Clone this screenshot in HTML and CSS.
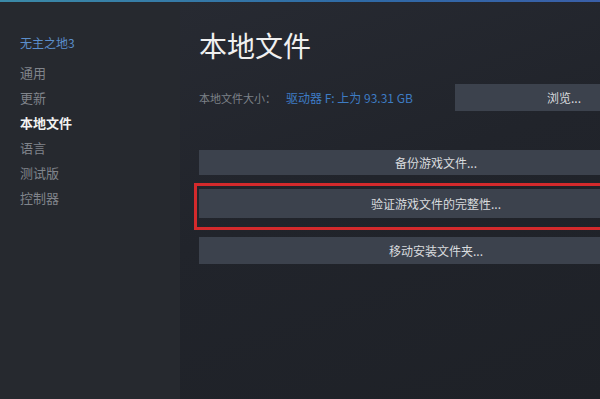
FILE: index.html
```html
<!DOCTYPE html>
<html lang="zh-CN">
<head>
<meta charset="utf-8">
<link rel="stylesheet" href="styles.css">
</head>
<body>
<div class="topbar"></div>
<div class="layout">
  <nav class="sidebar">
    <div class="game">无主之地3</div>
    <div class="nav-item">通用</div>
    <div class="nav-item">更新</div>
    <div class="nav-item active">本地文件</div>
    <div class="nav-item">语言</div>
    <div class="nav-item">测试版</div>
    <div class="nav-item">控制器</div>
  </nav>
  <main class="main">
    <div class="content">
      <h1 class="title">本地文件</h1>
      <div class="size-row">
        <span class="size-label">本地文件大小：</span>
        <span class="size-value">驱动器 F: 上为 93.31 GB</span>
        <div class="btn browse">浏览...</div>
      </div>
      <div class="actions">
        <div class="btn action">备份游戏文件...</div>
        <div class="highlight">
          <div class="btn action verify">验证游戏文件的完整性...</div>
        </div>
        <div class="btn action move">移动安装文件夹...</div>
      </div>
    </div>
  </main>
</div>
</body>
</html>
```

FILE: styles.css
```css
html, body {
  margin: 0;
  padding: 0;
  width: 600px;
  height: 399px;
  overflow: hidden;
  background: #22252c;
  font-family: "Noto Sans CJK SC", "Noto Sans", sans-serif;
}

.topbar {
  height: 2px;
  background: linear-gradient(90deg, #3b8aa8 0%, #2f6aa6 60%, #3a5fa8 100%);
}

.layout {
  display: flex;
  height: 397px;
}

.sidebar {
  width: 180px;
  flex: none;
  box-sizing: border-box;
  padding: 28px 0 0 20px;
  background: #26292f;
}

.game {
  font-size: 12px;
  line-height: 25px;
  color: #5b8ecb;
  margin-bottom: 5px;
}

.nav-item {
  font-size: 13px;
  line-height: 25px;
  color: #80848b;
}

.nav-item.active {
  color: #f2f2f2;
  font-weight: 700;
}

.main {
  flex: 1;
  overflow: hidden;
  box-sizing: border-box;
  padding: 29px 0 0 19px;
  background: linear-gradient(160deg, #272a32 0%, #21242b 45%, #1e2127 100%);
}

.content {
  width: 474px;
}

.title {
  margin: 0;
  font-size: 28px;
  line-height: 28px;
  font-weight: 400;
  color: #f0f0f0;
}

.size-row {
  display: flex;
  align-items: center;
  height: 27px;
  margin-top: 25px;
  font-size: 11px;
}

.size-label {
  color: #7d8289;
}

.size-value {
  margin-left: 10px;
  font-size: 12px;
  color: #3e7cc4;
}

.btn {
  display: flex;
  align-items: center;
  justify-content: center;
  background: #3c424d;
  color: #d9dbde;
  font-size: 12px;
}

.browse {
  margin-left: auto;
  width: 218px;
  height: 27px;
}

.actions {
  margin-top: 39px;
}

.action {
  height: 25px;
}

.highlight {
  margin: 8px 0 0 -5px;
  border: 3px solid #d42a2c;
  border-right: none;
  padding: 3px 0 9px 2px;
}

.verify {
  height: 29px;
}

.move {
  margin-top: 7px;
  height: 27px;
}
```
